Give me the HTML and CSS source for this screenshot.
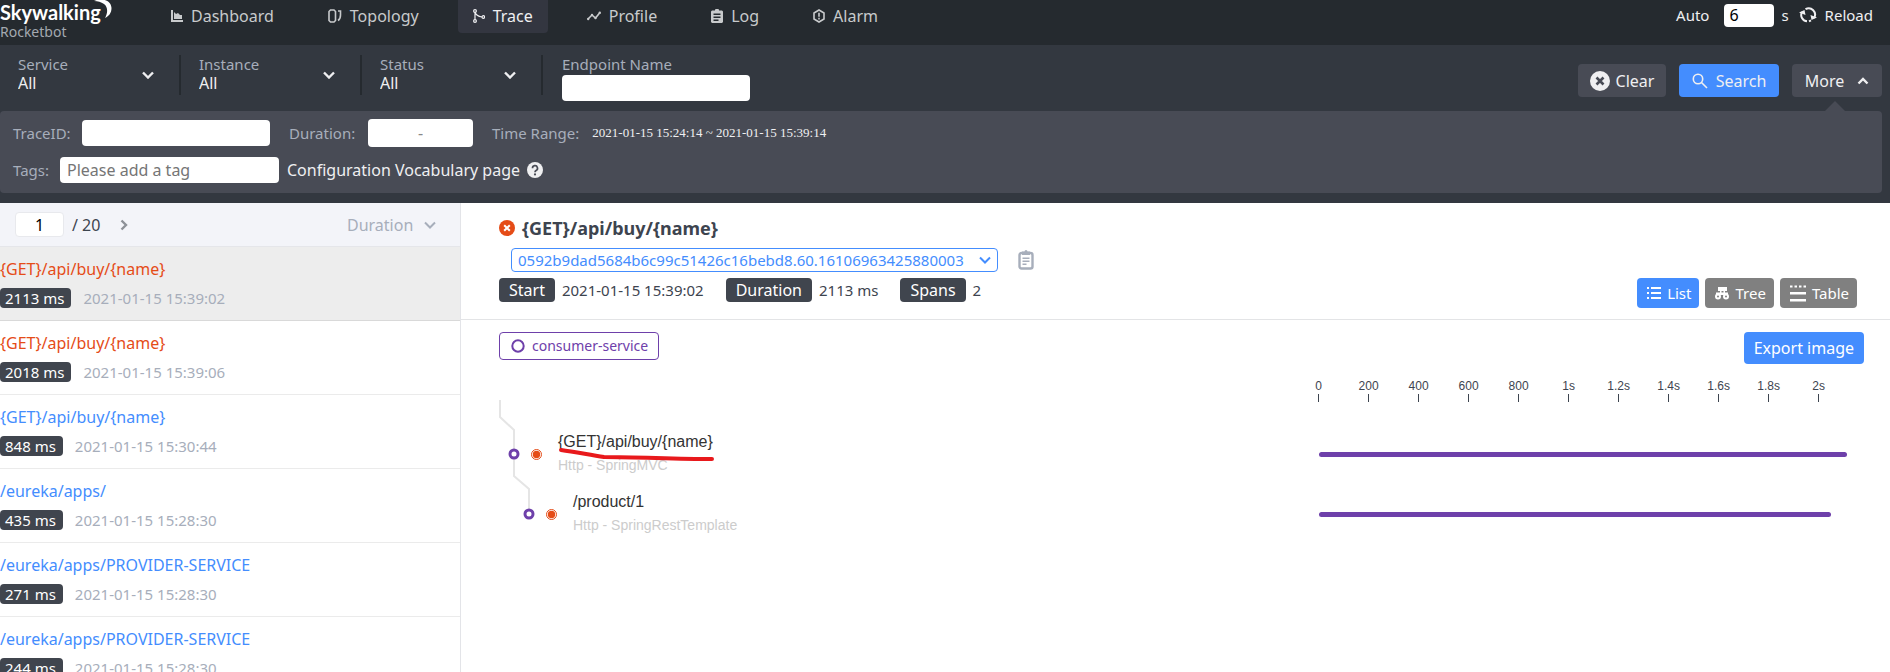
FILE: index.html
```html
<!DOCTYPE html>
<html lang="en">
<head>
<meta charset="utf-8">
<title>SkyWalking Rocketbot - Trace</title>
<link rel="stylesheet" href="styles.css">
</head>
<body>
<header class="header">
  <div class="brand">
    <div class="logo"><span>Skywalking</span><svg class="moon" viewBox="0 0 20 20"><path d="M0 1C6-2 17-1 17.500 8c0 5-2.500 8-6.500 10 3-5 3-11-1-14C7 2 4 1 0 1z"/></svg></div>
    <div class="product">Rocketbot</div>
  </div>
  <nav class="nav">
    <a class="nav-item" href="#"><svg class="ic" viewBox="0 0 12 12"><path d="M0 0h2v10h10v2H0zM3 9V2l2 2 2-1 2 2h2v4z"/></svg>Dashboard</a>
    <a class="nav-item" href="#"><svg class="ic ic-wide" viewBox="0 0 14 14"><path class="ln" d="M2.500 1h3.500L7.500 2.500v9L6 13H2.500L1 11.500v-9z"/><path class="ln" d="M10 2h2.500v4q0 4-2.500 5.500"/></svg>Topology</a>
    <a class="nav-item active" href="#"><svg class="ic" viewBox="0 0 12 14"><path class="ln thin" d="M2 3v8M2 3q1 4 7 5"/><circle class="ln thin" cx="2" cy="2" r="1.400"/><circle class="ln thin" cx="2" cy="12" r="1.400"/><circle class="ln thin" cx="10.300" cy="8" r="1.300"/></svg>Trace</a>
    <a class="nav-item" href="#"><svg class="ic ic-wide" viewBox="0 0 14 12"><path class="ln" d="M1 9l4-4 3.500 3L13 2.500"/><circle cx="1.200" cy="9" r="1.200"/><circle cx="5" cy="5" r="1.200"/><circle cx="8.500" cy="8" r="1.200"/><circle cx="12.800" cy="2.800" r="1.200"/></svg>Profile</a>
    <a class="nav-item" href="#"><svg class="ic" viewBox="0 0 12 14"><path fill-rule="evenodd" d="M1 1.500h3a2 2 0 0 1 4 0h3l1 1V13l-1 1H1l-1-1V2.500zM2.500 4.500V6h7V4.500zm0 3V9h7V7.500zm0 3V12h5v-1.500z"/></svg>Log</a>
    <a class="nav-item" href="#"><svg class="ic" viewBox="0 0 12 14"><path class="ln" d="M6 1l5 3v6l-5 3-5-3V4z"/><path class="ln" d="M6 3.800v4M6 8.800v1.600"/></svg>Alarm</a>
  </nav>
  <div class="reload">
    <span class="auto">Auto</span>
    <input class="auto-input" type="text" value="6" aria-label="Auto reload interval in seconds">
    <span class="sec">s</span>
    <button class="reload-btn" type="button"><svg class="reload-ic" viewBox="0 0 18 16"><path class="ln bold" d="M8 14.300A6.300 6.300 0 0 1 3 5M6.500 2.200A6.300 6.300 0 0 1 15 11M10 14.300l2-1"/><path d="M0 5.500L5.500 3 6.500 8zM18 10.500L12.500 13l-1-5z"/></svg>Reload</button>
  </div>
</header>

<section class="filters">
  <div class="bar">
    <label class="pick"><span class="pick-text"><span class="pick-label">Service</span><select class="pick-select"><option>All</option></select></span><svg class="chev" viewBox="0 0 12 8"><path d="M1 1.500l5 5 5-5"/></svg></label>
    <label class="pick"><span class="pick-text"><span class="pick-label">Instance</span><select class="pick-select"><option>All</option></select></span><svg class="chev" viewBox="0 0 12 8"><path d="M1 1.500l5 5 5-5"/></svg></label>
    <label class="pick"><span class="pick-text"><span class="pick-label">Status</span><select class="pick-select"><option>All</option></select></span><svg class="chev" viewBox="0 0 12 8"><path d="M1 1.500l5 5 5-5"/></svg></label>
    <label class="endpoint"><span class="pick-label">Endpoint Name</span><input class="box" type="text"></label>
    <div class="actions">
      <button class="btn clear" type="button"><svg class="ic20" viewBox="0 0 20 20"><circle cx="10" cy="10" r="10"/><path class="x" d="M6.500 6.500l7 7M13.500 6.500l-7 7"/></svg>Clear</button>
      <button class="btn search" type="button"><svg class="ic16" viewBox="0 0 16 16"><circle class="ln" cx="6" cy="6" r="4.700"/><path class="ln" d="M9.500 9.500L15 15"/></svg>Search</button>
      <button class="btn more" type="button">More<svg class="chev" viewBox="0 0 12 8"><path d="M1.500 6.500L6 2l4.500 4.500"/></svg></button>
    </div>
  </div>
  <div class="panel">
    <div class="line">
      <label class="field trace-id"><span class="muted">TraceID:</span><input class="box" type="text"></label>
      <div class="field duration"><span class="muted">Duration:</span><span class="range"><input class="range-in" type="text" aria-label="Minimum duration"><span>-</span><input class="range-in" type="text" aria-label="Maximum duration"></span></div>
      <div class="field time"><span class="muted">Time Range:</span><span class="time-value">2021-01-15 15:24:14 ~ 2021-01-15 15:39:14</span></div>
    </div>
    <div class="line">
      <label class="field tags"><span class="muted">Tags:</span><input class="box" type="text" placeholder="Please add a tag"></label>
      <a class="vocab" href="#">Configuration Vocabulary page<svg class="help" viewBox="0 0 16 16"><circle cx="8" cy="8" r="8"/><path class="q" d="M5.500 6.200a2.500 2.500 0 1 1 3.600 2.200Q8 9 8 10.200"/><circle class="qd" cx="8" cy="12.400" r="1.100"/></svg></a>
    </div>
  </div>
</section>

<main class="main">
  <aside class="list">
    <div class="list-head">
      <input class="page" type="text" value="1" aria-label="Page"><span class="total">/ 20</span>
      <button class="next" type="button" aria-label="Next page"><svg viewBox="0 0 8 12"><path d="M1.500 1.500L6 6l-4.500 4.500"/></svg></button>
      <label class="sort"><select class="sort-select" aria-label="Sort"><option>Duration</option></select><svg class="chev" viewBox="0 0 12 8"><path d="M1 1.500l5 5 5-5"/></svg></label>
    </div>
    <ul class="traces">
      <li class="trace selected"><a class="name error" href="#">{GET}/api/buy/{name}</a><div class="meta"><span class="badge">2113 ms</span><time>2021-01-15 15:39:02</time></div></li>
      <li class="trace"><a class="name error" href="#">{GET}/api/buy/{name}</a><div class="meta"><span class="badge">2018 ms</span><time>2021-01-15 15:39:06</time></div></li>
      <li class="trace"><a class="name" href="#">{GET}/api/buy/{name}</a><div class="meta"><span class="badge">848 ms</span><time>2021-01-15 15:30:44</time></div></li>
      <li class="trace"><a class="name" href="#">/eureka/apps/</a><div class="meta"><span class="badge">435 ms</span><time>2021-01-15 15:28:30</time></div></li>
      <li class="trace"><a class="name" href="#">/eureka/apps/PROVIDER-SERVICE</a><div class="meta"><span class="badge">271 ms</span><time>2021-01-15 15:28:30</time></div></li>
      <li class="trace"><a class="name" href="#">/eureka/apps/PROVIDER-SERVICE</a><div class="meta"><span class="badge">244 ms</span><time>2021-01-15 15:28:30</time></div></li>
    </ul>
  </aside>

  <section class="detail">
    <div class="detail-head">
      <h1 class="title"><svg class="err" viewBox="0 0 16 16"><circle cx="8" cy="8" r="8"/><path d="M5.200 5.200l5.600 5.600M10.800 5.200l-5.600 5.600"/></svg>{GET}/api/buy/{name}</h1>
      <div class="id-line">
        <label class="id-box"><select class="id-select" aria-label="Trace ID"><option>0592b9dad5684b6c99c51426c16bebd8.60.16106963425880003</option></select><svg class="chev" viewBox="0 0 12 8"><path d="M1 1.500l5 5 5-5"/></svg></label>
        <button class="copy" type="button" aria-label="Copy trace ID"><svg viewBox="0 0 16 20"><rect class="cb" x="1.500" y="3" width="13" height="15.500" rx="2"/><path d="M4 1.500h2.500a1.500 1.500 0 0 1 3 0H12V5H4zM4.500 7.500h7V9h-7zm0 3h7V12h-7zm0 3h4V15h-4z"/></svg></button>
      </div>
      <div class="facts">
        <div class="stats">
          <span class="stat"><span class="tag">Start</span>2021-01-15 15:39:02</span>
          <span class="stat"><span class="tag">Duration</span>2113 ms</span>
          <span class="stat"><span class="tag">Spans</span>2</span>
        </div>
        <div class="views">
          <button class="view on" type="button"><svg class="v14" viewBox="0 0 14 14"><path d="M0 1h2v2H0zm4 0h10v2H4zM0 6h2v2H0zm4 0h10v2H4zM0 11h2v2H0zm4 0h10v2H4z"/></svg>List</button>
          <button class="view" type="button"><svg class="v14" viewBox="0 0 14 14"><path d="M3 1h9v4H3zM5 5h1.500v3H5zM8.500 5H10v3H8.500zM1 6.500h12V9H1z"/><circle class="ln bold" cx="3" cy="10.500" r="2"/><circle class="ln bold" cx="11" cy="10.500" r="2"/></svg>Tree</button>
          <button class="view" type="button"><svg class="v16" viewBox="0 0 16 18"><path d="M0 1.500h2.500v2H0zm4.500 0H7v2H4.500zm4.500 0h2.500v2H9zm4.500 0H16v2h-2.500zM0 8h16v2.500H0zm0 7h16v2.500H0z"/></svg>Table</button>
        </div>
      </div>
    </div>
    <div class="chart-head">
      <span class="service"><svg viewBox="0 0 14 14"><circle cx="7" cy="7" r="5.700"/></svg>consumer-service</span>
      <button class="export" type="button">Export image</button>
    </div>
    <div class="chart">
      <div class="axis">
        <span class="tick">0</span><span class="tick">200</span><span class="tick">400</span><span class="tick">600</span><span class="tick">800</span><span class="tick">1s</span><span class="tick">1.2s</span><span class="tick">1.4s</span><span class="tick">1.6s</span><span class="tick">1.8s</span><span class="tick">2s</span>
      </div>
      <div class="spans">
        <svg class="wires" viewBox="0 0 70 130"><path d="M1 0v17l14 13v46l15 13v25"/><g class="node"><circle cx="15" cy="54" r="4"/><circle cx="30" cy="114" r="4"/></g><g class="ring"><circle cx="37.500" cy="54.500" r="5"/><circle cx="52.500" cy="114.500" r="5"/></g><g class="dot"><circle cx="37.500" cy="54.500" r="3.700"/><circle cx="52.500" cy="114.500" r="3.700"/></g></svg>
        <div class="span"><div class="label"><div class="op">{GET}/api/buy/{name}</div><div class="kind">Http - SpringMVC</div></div><div class="track"><div class="span-bar" style="width:100%"></div></div></div>
        <div class="span child"><div class="label"><div class="op">/product/1</div><div class="kind">Http - SpringRestTemplate</div></div><div class="track"><div class="span-bar" style="width:97%"></div></div></div>
        <svg class="mark" viewBox="0 0 160 16"><path d="M5 4C20 6 34 9 48 11c35 0 70 2 108 2"/></svg>
      </div>
    </div>
  </section>
</main>
</body>
</html>
```
FILE: styles.css
```css
* { box-sizing: border-box; }
body {
  margin: 0;
  height: 100vh;
  display: flex;
  flex-direction: column;
  overflow: hidden;
  background: #fff;
  color: #3d444f;
  font: 16px/20px "Noto Sans", "Open Sans", sans-serif;
}
button, input, select {
  margin: 0;
  padding: 0;
  border: 0;
  background: none;
  color: inherit;
  font: inherit;
  appearance: none;
}
input, .range { background: #fff; border-radius: 4px; color: #000; }
a { color: inherit; text-decoration: none; }
svg { flex: none; fill: currentColor; }
.ln { fill: none; stroke: currentColor; stroke-width: 1.6; }
.thin { stroke-width: 1.2; }
.bold { stroke-width: 2; }

.header {
  display: flex;
  align-items: flex-start;
  height: 45px;
  flex: none;
  background: #252a2f;
  color: #c8cacc;
}
.brand { width: 156px; flex: none; }
.logo {
  display: flex;
  height: 24px;
  color: #fff;
  font: bold 20px/24px Lato, sans-serif;
}
.logo span { width: 94px; white-space: nowrap; }
.moon { width: 20px; height: 20px; }
.product { font-size: 14px; line-height: 16px; color: #a3a9b0; }
.nav { display: flex; gap: 24px; }
.nav-item {
  display: flex;
  align-items: center;
  gap: 8px;
  height: 33px;
  padding: 0 15px 2px;
  border-radius: 0 0 4px 4px;
}
.active { background: #333640; color: #efeff1; }
.ic { width: 12px; height: 14px; }
.ic-wide { width: 14px; }
.reload {
  display: flex;
  align-items: center;
  height: 30px;
  margin-left: auto;
  padding-right: 17px;
  color: #efeff1;
  font-size: 15px;
}
.auto-input { width: 50px; height: 23px; margin: 0 7px 0 15px; padding-left: 5px; font-size: 16px; }
.sec { margin-right: 10px; }
.reload-btn { display: flex; align-items: center; gap: 8px; }
.reload-ic { width: 18px; height: 16px; }

.filters {
  flex: none;
  padding: 10px 8px 10px 0;
  background: #333840;
  color: #efeff1;
}
.bar { display: flex; height: 56px; }
.pick {
  display: flex;
  align-items: center;
  width: 181px;
  height: 40px;
  padding: 0 25px 0 18px;
  border-right: 2px solid #252a2f;
}
.pick-text { flex: 1; display: flex; flex-direction: column; padding-bottom: 2px; }
.pick-label { font-size: 15px; line-height: 18px; color: #a7aebb; }
.pick-select { width: 100%; line-height: 20px; }
.chev { width: 12px; height: 8px; }
.chev path, .next path { fill: none; stroke: currentColor; stroke-width: 2.4; }
.endpoint { display: flex; flex-direction: column; width: 207px; padding-left: 19px; gap: 2px; }
.box { height: 26px; width: 188px; padding: 0 7px; }
.actions { display: flex; gap: 13px; margin: 9px 0 0 auto; }
.btn {
  display: flex;
  align-items: center;
  justify-content: center;
  height: 33px;
  border-radius: 4px;
  background: #484b55;
}
.clear { width: 88px; gap: 6px; }
.search { width: 100px; gap: 8px; background: #448dfe; }
.more { width: 90px; gap: 13px; }
.ic20 { width: 20px; height: 20px; }
.ic16 { width: 16px; height: 16px; }
.x { stroke: #484b55; stroke-width: 2.6; }
.panel {
  position: relative;
  display: flex;
  flex-direction: column;
  gap: 10px;
  padding: 8px 13px 10px;
  border-radius: 4px;
  background: #484b55;
}
.panel::before {
  content: "";
  position: absolute;
  right: 37px;
  top: -10px;
  border: 10px solid transparent;
  border-top: 0;
  border-bottom-color: #484b55;
}
.line { display: flex; align-items: center; }
.field { display: flex; align-items: center; }
.muted { font-size: 15px; color: #a7aebb; white-space: nowrap; }
.trace-id { width: 276px; justify-content: space-between; padding-right: 19px; }
.duration { width: 203px; justify-content: space-between; padding-right: 19px; }
.range { display: flex; align-items: center; width: 105px; height: 28px; color: #888; }
.range-in { width: 50px; }
.time { gap: 13px; }
.time-value { font: 13px/20px "Liberation Serif", serif; }
.tags { width: 274px; justify-content: space-between; padding-right: 8px; }
.tags .box { width: 219px; }
.tags .box::placeholder { color: #757575; }
.vocab { display: flex; align-items: center; gap: 7px; }
.help { width: 16px; height: 16px; }
.q { fill: none; stroke: #484b55; stroke-width: 1.7; }
.qd { fill: #484b55; }

.main { flex: 1; min-height: 0; display: flex; }
.list { width: 461px; flex: none; overflow: hidden; border-right: 1px solid #e3e4e8; }
.list-head {
  display: flex;
  align-items: center;
  height: 44px;
  padding: 0 24px 0 15px;
  border-bottom: 1px solid #e5e6ea;
  background: #f3f4f9;
}
.page { width: 49px; height: 25px; border: 1px solid #e8e9ed; text-align: center; }
.total { margin: 0 20px 0 8px; }
.next { display: flex; color: #8d9198; }
.next svg { width: 8px; height: 12px; }
.sort { display: flex; align-items: center; gap: 10px; margin-left: auto; color: #a7aebb; }
.sort .chev path, .id-box .chev path { stroke-width: 2; }
.traces { margin: 0; padding: 0; list-style: none; }
.trace { height: 74px; padding-top: 12px; border-bottom: 1px solid #ebebeb; }
.selected { background: #ededed; border-color: #d9d9d9; }
.name { display: block; color: #448dfe; }
.error { color: #e54c17; }
.meta { display: flex; align-items: center; gap: 12px; margin-top: 9px; font-size: 15px; color: #a7aebb; }
.badge { padding: 0 7px 0 5px; border-radius: 4px; background: #40454e; color: #fff; }

.detail { flex: 1; min-width: 0; }
.detail-head { height: 117px; padding: 14px 33px 0 38px; border-bottom: 1px solid #e3e4e6; }
.title { display: flex; align-items: center; gap: 7px; margin: 0; font-size: 18px; line-height: 22px; }
.err { width: 16px; height: 16px; color: #e54c17; }
.err path { stroke: #fff; stroke-width: 2; }
.id-line { display: flex; align-items: center; gap: 20px; margin: 9px 0 6px 12px; }
.id-box {
  display: flex;
  align-items: center;
  justify-content: space-between;
  min-width: 487px;
  height: 24px;
  padding: 0 6px;
  border: 1px solid #448dfe;
  border-radius: 4px;
  color: #448dfe;
}
.id-select { font-size: 15px; }
.copy { display: flex; color: #a7aebb; }
.copy svg { width: 16px; height: 20px; }
.cb { fill: none; stroke: currentColor; stroke-width: 2.4; }
.facts { display: flex; justify-content: space-between; align-items: flex-start; }
.stats { display: flex; gap: 22px; }
.stat { display: flex; align-items: center; gap: 7px; font-size: 15px; }
.tag { padding: 2px 10px; border-radius: 4px; background: #40454e; color: #fff; font-size: 16px; }
.views { display: flex; gap: 6px; }
.view {
  display: flex;
  align-items: center;
  gap: 6px;
  height: 30px;
  padding: 0 8px 0 10px;
  border-radius: 4px;
  background: #808080;
  color: #fff;
  font-size: 15px;
}
.on { background: #448dfe; }
.v14 { width: 14px; height: 14px; }
.v16 { width: 16px; height: 18px; }
.chart-head {
  display: flex;
  justify-content: space-between;
  align-items: flex-start;
  padding: 12px 26px 0 38px;
}
.service {
  display: flex;
  align-items: center;
  gap: 7px;
  height: 28px;
  padding: 0 10px 0 11px;
  border: 1px solid #6e40aa;
  border-radius: 4px;
  color: #6e40aa;
  font-size: 14px;
}
.service svg { width: 14px; height: 14px; }
.service circle { fill: none; stroke: currentColor; stroke-width: 2; }
.export { height: 32px; padding: 0 10px; border-radius: 4px; background: #448dfe; color: #fff; }

.chart { padding: 14px 43px 0 38px; font-family: "Liberation Sans", Arial, sans-serif; }
.axis { display: flex; width: 39.2%; margin-left: auto; }
.tick { flex: 0 0 9.465%; text-align: center; font-size: 12px; line-height: 16px; }
.tick:first-child { margin-left: -4.73%; }
.tick::after { content: ""; display: block; width: 1px; height: 8px; margin: 0 auto; background: #3d444f; }
.spans { position: relative; padding-top: 22px; }
.wires { position: absolute; left: 0; top: -2px; width: 70px; height: 130px; overflow: visible; }
.wires path { fill: none; stroke: #e5e5e5; stroke-width: 2; }
.node { fill: #fff; stroke: #6e40aa; stroke-width: 3; }
.ring { fill: none; stroke: #e54c17; stroke-width: 1; }
.dot { fill: #e54c17; }
.mark { position: absolute; left: 57px; top: 44px; width: 160px; height: 16px; }
.mark path { fill: none; stroke: #e8191c; stroke-width: 4; stroke-linecap: round; }
.span { display: flex; align-items: center; justify-content: space-between; height: 60px; padding-left: 59px; }
.child { padding-left: 74px; }
.label { padding-bottom: 3px; }
.op { line-height: 24px; color: #333; }
.kind { font-size: 14px; line-height: 22px; color: #ccc; }
.spans { --track: 39.2%; }
.track { position: absolute; right: 0; width: var(--track); }
.span-bar { height: 5px; border-radius: 3px; background: #6e40aa; }
```
